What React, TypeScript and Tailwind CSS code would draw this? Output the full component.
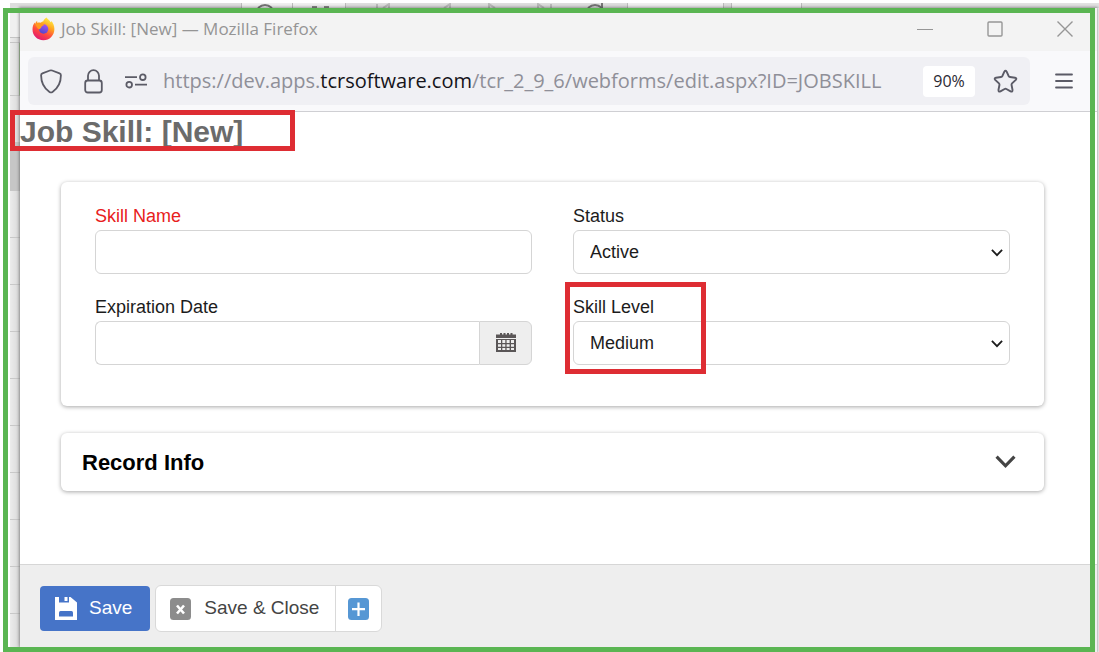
import { ReactNode } from 'react'

const UI_FONT = "font-['Open_Sans','Noto_Sans',sans-serif]"

const FIELD = 'h-11 w-full rounded-md border border-[#d5d5d5] bg-white text-lg text-[#1c1c1c] outline-none'

function FirefoxLogo() {
  return (
    <svg width="23" height="24" viewBox="0 0 23 24" aria-hidden="true">
      <defs>
        <linearGradient id="flame" x1="0.8" y1="0.05" x2="0.3" y2="1">
          <stop offset="0" stopColor="#fff044" />
          <stop offset="0.35" stopColor="#ffa21f" />
          <stop offset="0.65" stopColor="#ff4a3f" />
          <stop offset="1" stopColor="#e01873" />
        </linearGradient>
        <linearGradient id="globe" x1="0.7" y1="0" x2="0.3" y2="1">
          <stop offset="0" stopColor="#a455f5" />
          <stop offset="1" stopColor="#5146c8" />
        </linearGradient>
      </defs>
      <path
        d="M14.6 0.6c1 1.6 3 2.8 3.9 4.6.5-.2.7-.7.7-1.100 2 1.900 3.200 4.900 3.200 7.800 0 6.300-4.700 11.300-11 11.300S.5 18.500.5 12.500c0-3 .8-5.200 2.200-7l.4 1.500c.3-1.300 1-2.400 2-3.200l.3 2.100c.8-.4 2.200-.5 3.200-.1C9.600 4.900 10.500 4.600 11.200 4.500c.4-1.600 1.800-3 3.400-3.900z"
        fill="url(#flame)"
      />
      <circle cx="11.600" cy="12" r="4.700" fill="url(#globe)" />
      <path d="M3.200 7.500c2-1.800 4.300-1.800 6-.8 1.200.2 2.600.1 3 .9-.4 1.200-2.300 1.500-2.700 2.100-.1 1.300-1.200 1.600-2.100 2.500l-1.700-.8z" fill="#ff9a1f" />
    </svg>
  )
}

function ShieldIcon() {
  return (
    <svg width="22" height="25" viewBox="0 0 22 25" fill="none" stroke="#5b5b66" strokeWidth="1.800" strokeLinejoin="round" aria-hidden="true">
      <path d="M9.900 1.500Q11 1.100 12.100 1.500L19.600 4.300Q20.900 4.800 20.900 6.200C20.900 13.500 17.800 19.300 12.500 22.900Q11 23.800 9.500 22.900C4.200 19.300 1.100 13.500 1.100 6.200Q1.100 4.800 2.400 4.300Z" />
    </svg>
  )
}

function LockIcon() {
  return (
    <svg width="19" height="25" viewBox="0 0 19 25" fill="none" stroke="#5b5b66" strokeWidth="1.800" aria-hidden="true">
      <rect x="1.200" y="11.500" width="16.600" height="12" rx="2.500" />
      <path d="M4 11.500V6.700a5.500 5.500 0 0 1 11 0v4.800" />
    </svg>
  )
}

function PermissionsIcon() {
  return (
    <svg width="22" height="16" viewBox="0 0 22 16" fill="none" stroke="#5b5b66" strokeWidth="1.800" aria-hidden="true">
      <path d="M0 4.200h12M10 11.700h12" />
      <circle cx="17.800" cy="4.200" r="2.800" />
      <circle cx="4.200" cy="11.700" r="2.800" />
    </svg>
  )
}

function StarIcon() {
  return (
    <svg width="25" height="25" viewBox="0 0 26 25" fill="none" stroke="#5b5b66" strokeWidth="2" strokeLinejoin="round" aria-hidden="true">
      <path d="M11.800 2.300Q13 .4 14.200 2.300L16.300 6.900Q16.700 7.800 17.700 7.900L22.900 8.600Q25.100 9.100 23.700 10.800L19.800 14.500Q19.100 15.200 19.300 16.100L20.300 21.200Q20.400 23.600 18.300 22.800L13.900 20.300Q13 19.800 12.100 20.300L7.700 22.800Q5.600 23.600 5.700 21.200L6.700 16.100Q6.900 15.200 6.200 14.500L2.300 10.800Q.9 9.100 3.100 8.600L8.300 7.900Q9.300 7.800 9.700 6.900Z" />
    </svg>
  )
}

function CalendarIcon() {
  return (
    <svg width="20" height="20" viewBox="0 0 20 20" aria-hidden="true">
      <path d="M4 0h2v2H4zM7.500 0h2v2h-2zM11 0h2v2h-2zM14.500 0h2v2h-2zM0 1.500h20V5H0zM0 6h20v13H0z" fill="#5a5657" />
      <path d="M2 7h3v3H2zM6.300 7h3v3h-3zM10.600 7h3v3h-3zM15 7h3v3h-3zM2 11.200h3v2.500H2zM6.300 11.200h3v2.500h-3zM10.600 11.200h3v2.500h-3zM15 11.200h3v2.500h-3zM2 15h3v2H2zM6.300 15h3v2h-3zM10.600 15h3v2h-3zM15 15h3v2h-3z" fill="#eee" />
    </svg>
  )
}

function SaveIcon() {
  return (
    <svg width="22" height="23" viewBox="0 0 22 23" aria-hidden="true">
      <path d="M0 0h4v5.500h10V0h1.500L22 5.500V23H0z" fill="#fff" />
      <path d="M9.500 0h3v4h-3z" fill="#fff" />
      <path d="M5.500 14h11q1.500 0 1.500 1.500v4H4v-4q0-1.500 1.500-1.500z" fill="#4674c8" />
    </svg>
  )
}

function Chevron({ width, className }: { width: number; className?: string }) {
  return (
    <svg width={width} height={width * 0.65} viewBox="0 0 20 13" fill="none" stroke="currentColor" strokeWidth="3" className={className} aria-hidden="true">
      <path d="M1.500 1.500L10 10.300 18.500 1.500" />
    </svg>
  )
}

// Sliver of the grid page that shows above the popup
function BackgroundToolbar() {
  return (
    <div className="ml-[10px] mt-[3px] flex h-[5px] shrink-0 overflow-hidden bg-[#e2e2e2]">
      <svg width="800" height="5" viewBox="0 0 800 5" fill="none" aria-hidden="true">
        <path d="M0 0h231v5H0zM335 0h282v5H335zM713 0h8v5h-8z" fill="#dedede" />
        <path d="M231 0h104v5H231zM617 0h96v5h-96zM721 0h70v5h-70z" fill="#efefef" />
        <path d="M231.500 0v5M282.500 0v5M335.500 0v5M617.500 0v5M713.500 0v5M721.500 0v5M791.500 0v5" stroke="#bcbcbc" />
        <path d="M248 5q7-6 14 0M578 5q7-6 14 0M592 0v5" stroke="#777" strokeWidth="2" />
        <path d="M302 4h5M314 4h5" stroke="#888" strokeWidth="2" />
        <path d="M367 1v4M373 5l6-4v4M434 5l6-4v4M479 5v-4l6 4M528 5v-4l6 4M541 1v4" stroke="#bbb" strokeWidth="2" />
      </svg>
    </div>
  )
}

function BackgroundRows() {
  return (
    <div className="ml-[10px] flex w-[10px] shrink-0 flex-col bg-linear-to-r from-[#ececec] to-[#d8d8d8]">
      <div className="h-[30px] border-b border-[#c4c4c4] bg-[#f0f0f0]" />
      <div className="h-[5px] border-b border-[#c4c4c4]" />
      <div className="h-[53px] border-b border-r border-b-[#c8c8c8] border-r-[#a9c4a0]" />
      <div className="h-[46px]" />
      <div className="h-[49px] bg-[#c6c6c6]" />
      {Array.from({ length: 9 }, (_, i) => (
        <div key={i} className="h-[47px] border-b border-[#c8c8c8]" />
      ))}
    </div>
  )
}

function Field({ id, label, required, marked, children }: { id: string; label: string; required?: boolean; marked?: boolean; children: ReactNode }) {
  return (
    <div className="relative">
      <label htmlFor={id} className={`mb-0.5 block text-lg leading-6 ${required ? 'text-[#e8201c]' : 'text-[#1c1c1c]'}`}>
        {label}
      </label>
      {children}
      {marked && <div className="pointer-events-none absolute -left-2 -top-[13px] h-[92px] w-[141px] border-5 border-[#de2d33]" />}
    </div>
  )
}

function Select({ id, options }: { id: string; options: string[] }) {
  return (
    <div className="relative">
      <select id={id} className={`${FIELD} appearance-none pl-4 pr-8`}>
        {options.map((option) => (
          <option key={option}>{option}</option>
        ))}
      </select>
      <Chevron width={12} className="pointer-events-none absolute right-[7px] top-[19px] text-[#1c1c1c]" />
    </div>
  )
}

function TitleBar() {
  return (
    <div className="flex h-[43px] shrink-0 items-center bg-[#f3f3f3] pb-0.5 pl-3 pr-6">
      <FirefoxLogo />
      <span className={`ml-1.5 flex-1 text-[17px] text-[#959595] ${UI_FONT}`}>Job Skill: [New] — Mozilla Firefox</span>
      <div className="flex items-center gap-[54px]">
        <button aria-label="Minimize" className="h-4 w-4">
          <svg width="16" height="16" fill="none" stroke="#969696"><path d="M0 8.500h16" /></svg>
        </button>
        <button aria-label="Maximize" className="h-4 w-4">
          <svg width="16" height="16" fill="none" stroke="#969696" strokeWidth="1.400"><rect x="1" y="1" width="14" height="14" rx="1" /></svg>
        </button>
        <button aria-label="Close" className="h-4 w-4">
          <svg width="16" height="16" fill="none" stroke="#969696" strokeWidth="1.400"><path d="M.5.500l15 15M15.500.5l-15 15" /></svg>
        </button>
      </div>
    </div>
  )
}

function AddressBar() {
  return (
    <div className="flex h-[61px] shrink-0 items-center border-b border-[#cfcfd3] bg-[#f9f9fb] pl-2 pr-6">
      <div className="flex h-12 flex-1 items-center rounded-md bg-[#f0f0f4] pl-3 pr-3">
        <ShieldIcon />
        <span className="ml-[22px]"><LockIcon /></span>
        <span className="ml-[22px]"><PermissionsIcon /></span>
        <div className={`ml-4 flex-1 whitespace-nowrap text-xl text-[#8f8f98] ${UI_FONT}`}>
          https://dev.apps.<span className="text-[#15141a]">tcrsoftware.com</span>/tcr_2_9_6/webforms/edit.aspx?ID=JOBSKILL
        </div>
        <button className={`mr-[18px] h-[31px] w-[52px] rounded bg-white text-base text-[#2b2a33] ${UI_FONT}`}>90%</button>
        <button aria-label="Bookmark this page"><StarIcon /></button>
      </div>
      <button aria-label="Open application menu" className="ml-[25px]">
        <svg width="18" height="16" fill="none" stroke="#5b5b66" strokeWidth="1.800" strokeLinecap="round">
          <path d="M1 1.500h16M1 8h16M1 14.500h16" />
        </svg>
      </button>
    </div>
  )
}

function Footer() {
  return (
    <div className="flex h-[88px] shrink-0 items-start border-t border-[#d6d6d6] bg-[#eee] pl-5 pt-5 text-[19px]">
      <button className="mt-px flex h-[45px] items-center gap-3 rounded bg-[#4674c8] pl-[15px] pr-[18px] text-white">
        <SaveIcon />
        Save
      </button>
      <div className="ml-[5px] flex h-[47px] rounded-md border border-[#d9d9d9] bg-white text-[#444]">
        <button className="flex items-center gap-[13px] pl-3.5 pr-4">
          <svg width="21" height="22" viewBox="0 0 21 22" aria-hidden="true">
            <rect width="21" height="22" rx="3.500" fill="#8c8c8c" />
            <path d="M7 7.500l7 8M14 7.500l-7 8" stroke="#fff" strokeWidth="2.600" />
          </svg>
          Save &amp; Close
        </button>
        <button aria-label="Save and add new" className="border-l border-[#d9d9d9] px-3">
          <svg width="21" height="22" viewBox="0 0 21 22" aria-hidden="true">
            <rect width="21" height="22" rx="3.500" fill="#5697d4" />
            <path d="M4 11.200h13M10.500 4.500v13.500" stroke="#fff" strokeWidth="2.200" />
          </svg>
        </button>
      </div>
    </div>
  )
}

export default function App() {
  return (
    <div className="relative flex min-h-screen flex-col bg-white font-['Liberation_Sans',Arial,sans-serif]">
      <BackgroundToolbar />
      <div className="flex flex-1">
        <BackgroundRows />
        <main className="mr-0.5 flex flex-1 flex-col rounded-bl-lg shadow-[0_0_3px_1px_rgba(0,0,0,0.35)]">
          <TitleBar />
          <AddressBar />
          <div className="flex-1 bg-white">
            <div className="relative">
              <h1 className="text-3xl font-bold leading-10 text-[#6b6b6b]">Job Skill: [New]</h1>
              <div className="pointer-events-none absolute -left-2.5 -top-0.5 h-[41px] w-[285px] border-5 border-[#de2d33]" />
            </div>
            <div className="ml-[41px] mr-[53px] mt-[30px] flex flex-col gap-[27px]">
              <section className="grid grid-cols-2 gap-x-[41px] gap-y-[21px] rounded-md px-[34px] pb-[41px] pt-[22px] shadow-[0_1px_4px_rgba(0,0,0,0.35)]">
                <Field id="skill-name" label="Skill Name" required>
                  <input id="skill-name" type="text" className={`${FIELD} px-4`} />
                </Field>
                <Field id="status" label="Status">
                  <Select id="status" options={['Active', 'Inactive']} />
                </Field>
                <Field id="expiration" label="Expiration Date">
                  <div className="flex">
                    <input id="expiration" type="text" className={`${FIELD} min-w-0 flex-1 rounded-r-none border-r-0 px-4`} />
                    <button aria-label="Choose date" className="flex h-11 w-[53px] items-center justify-center rounded-r-md border border-[#d5d5d5] bg-[#eee]">
                      <CalendarIcon />
                    </button>
                  </div>
                </Field>
                <Field id="skill-level" label="Skill Level" marked>
                  <Select id="skill-level" options={['Medium', 'Low', 'High']} />
                </Field>
              </section>
              <section className="rounded-md shadow-[0_1px_4px_rgba(0,0,0,0.35)]">
                <button className="flex h-[58px] w-full items-center justify-between pl-[21px] pr-7 text-[22px] font-bold text-black">
                  Record Info
                  <Chevron width={21} className="text-[#444]" />
                </button>
              </section>
            </div>
          </div>
          <Footer />
        </main>
      </div>
      <div className="pointer-events-none absolute bottom-0 left-[3px] right-1 top-2 border-5 border-[#5ab552]" />
    </div>
  )
}
